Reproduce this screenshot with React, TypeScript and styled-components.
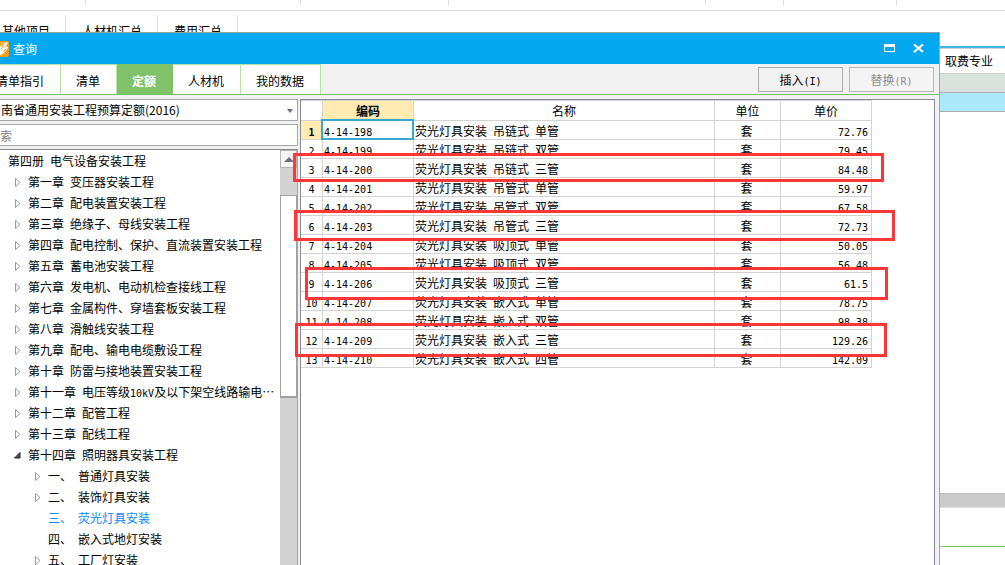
import React from "react";
import styled, { createGlobalStyle, css } from "styled-components";

const GlobalStyle = createGlobalStyle`
  * { box-sizing: border-box; }
  body { margin: 0; background: #fff; overflow: hidden; }
  body, button, select, input, table {
    font-family: "Noto Sans CJK SC", sans-serif;
    font-size: 12px;
    line-height: 16px;
    color: #000;
  }
`;

const HalfWidth = styled.span`
  font-family: "DejaVu Sans Mono", monospace;
  font-size: 10px;
  line-height: 10px;
  white-space: pre;
`;

/* Latin letters, digits and spaces take half the width of a Chinese character. */
function Mixed({ text }: { text: string }) {
  return (
    <>
      {text.split(/([\x20-\x7e]+)/).map((part, i) =>
        i % 2 ? <HalfWidth key={i}>{part}</HalfWidth> : part
      )}
    </>
  );
}

/* ---------- main window behind the dialog ---------- */

const Workspace = styled.div`
  position: relative;
  display: flex;
  flex-direction: column;
  height: 100vh;
  overflow: hidden;
`;

const Ribbon = styled.div`
  display: flex;
  flex: none;
  height: 11px;
  padding-bottom: 5px;
  border-bottom: 1px solid #dedede;
`;

const RibbonGroup = styled.div<{ $width: number }>`
  width: ${(p) => p.$width}px;
  flex: none;
  border-right: 1px solid #dcdcdc;
`;

const SheetTabs = styled.nav`
  display: flex;
  flex: none;
  height: 35px;
  padding-top: 4px;
`;

const SheetTab = styled.button`
  padding: 0 15px 0 16px;
  border: 0;
  border-right: 1px solid #dcdcdc;
  background: #fff;
  white-space: nowrap;
  &:first-child { padding-left: 2px; }
`;

const FeeGrid = styled.section`
  display: flex;
  flex: 1;
  flex-direction: column;
  margin-left: auto;
  width: 66px;
  border-top: 2px solid #3fb4e8;
`;

const FeeHeader = styled.div`
  height: 26px;
  padding: 4px 0 0 6px;
  border-top: 1px solid #d0d0d0;
  border-bottom: 1px solid #d0d0d0;
  line-height: 16px;
  white-space: nowrap;
`;

const FeeRow = styled.div<{ $color: string }>`
  height: 19px;
  border-bottom: 1px solid #adadad;
  background: ${(p) => p.$color};
`;

const FeeScroll = styled.div`
  height: 15px;
  margin-top: auto;
  border-top: 1px solid #c0c0c0;
  border-bottom: 1px solid #dedede;
  background: #cbcbcb;
`;

const FeeFooter = styled.div`
  height: 19px;
  margin-top: 38px;
  border-top: 1px solid #7bc66b;
`;

/* ---------- query dialog ---------- */

const Dialog = styled.section`
  position: absolute;
  top: 32px;
  left: -19px;
  right: 65px;
  bottom: 0;
  display: flex;
  flex-direction: column;
  border-top: 1px solid #9c9c9c;
  border-right: 1px solid #a3a3a3;
  background: #f1f1f1;
`;

const TitleBar = styled.header`
  display: flex;
  align-items: center;
  flex: none;
  height: 31px;
  padding: 0 14px 0 12px;
  background: #02a9f1;
`;

const Title = styled.h1`
  flex: 1;
  margin: 0 0 0 4px;
  color: #fff;
  font-size: 12px;
  font-weight: 400;
`;

const WindowButton = styled.button`
  display: flex;
  margin-left: 17px;
  padding: 0;
  border: 0;
  background: none;
`;

const ToolBar = styled.div`
  display: flex;
  flex: none;
  height: 31px;
  border-bottom: 1px solid #74c168;
`;

const Tab = styled.button<{ $active?: boolean }>`
  padding: 3px 16px 0 15px;
  border: 0;
  border-top: 1px solid #b5e3a5;
  border-right: 1px solid #b5e3a5;
  background: #fff;
  white-space: nowrap;
  ${(p) =>
    p.$active &&
    css`
      border-color: #80c269;
      background: #80c269;
      color: #fff;
      font-weight: 700;
    `}
`;

const Actions = styled.div`
  display: flex;
  gap: 6px;
  margin-left: auto;
  padding: 3px 5px 2px 0;
`;

const ActionButton = styled.button`
  width: 85px;
  padding: 0;
  border: 1px solid #adadad;
  background: #f1f1f1;
  &:disabled { color: #8c8c8c; border-color: #b8b8b8; background: #f4f4f4; }
`;

const Body = styled.div`
  display: flex;
  flex: 1;
  gap: 2px;
  min-height: 0;
  padding: 4px 4px 0 0;
`;

const SidePane = styled.aside`
  display: flex;
  flex: none;
  flex-direction: column;
  gap: 3px;
  width: 317px;
`;

const Combo = styled.div`
  position: relative;
  display: flex;
  flex: none;
`;

const LibrarySelect = styled.select`
  width: 100%;
  height: 22px;
  padding: 0 20px 0 19px;
  border: 1px solid #a6a6a6;
  border-radius: 0;
  appearance: none;
  background: #fff;
`;

const ComboArrow = styled.svg`
  position: absolute;
  top: 10px;
  right: 5px;
  pointer-events: none;
`;

const SearchInput = styled.input`
  flex: none;
  width: 100%;
  height: 22px;
  padding: 0 18px;
  border: 1px solid #a6a6a6;
  background: #fff;
  &::placeholder { color: #808080; opacity: 1; }
`;

const TreePane = styled.div`
  display: flex;
  flex: 1;
  min-height: 0;
  border-top: 1px solid #858793;
  border-right: 1px solid #a6a6a6;
  background: #fff;
`;

const Tree = styled.ul`
  flex: 1;
  min-width: 0;
  margin: 0;
  padding: 0 0 0 19px;
  overflow: hidden;
  list-style: none;
`;

const TreeItem = styled.li<{ $level: number; $selected?: boolean }>`
  display: flex;
  align-items: center;
  height: 21px;
  padding: 1px 0 0 ${(p) => p.$level * 20 - 6}px;
  color: ${(p) => (p.$selected ? "#0a8cff" : "#000")};
  white-space: nowrap;
`;

const TreeRoot = styled(TreeItem)`
  padding-left: 8px;
`;

const Expander = styled.button`
  display: flex;
  flex: none;
  width: 14px;
  padding: 0;
  border: 0;
  background: none;
`;

const ExpanderSpace = styled.span`
  flex: none;
  width: 14px;
`;

const ScrollBar = styled.div`
  display: flex;
  flex: none;
  flex-direction: column;
  width: 17px;
  background: #d3d3d3;
`;

const ScrollUp = styled.button`
  display: flex;
  align-items: center;
  justify-content: center;
  height: 18px;
  margin-bottom: 27px;
  padding: 0;
  border: 1px solid #b5b5b5;
  background: #f4f4f4;
`;

const ScrollThumb = styled.div`
  height: 203px;
  border: 1px solid #a0a0a0;
  border-bottom-width: 2px;
  background: #fff;
`;

const GridPane = styled.div`
  flex: 1;
  min-width: 0;
  overflow: hidden;
  border: 1px solid #858a93;
  border-bottom: 0;
  background: #fff;
`;

const Grid = styled.table`
  width: 571px;
  table-layout: fixed;
  border-spacing: 0;
  border-top: 1px solid #d3d3d3;
`;

const cell = css`
  padding: 0;
  border-right: 1px solid #d3d3d3;
  border-bottom: 1px solid #d3d3d3;
  font-weight: 400;
  white-space: nowrap;
`;

const HeadCell = styled.th<{ $marked?: boolean }>`
  ${cell}
  height: 20px;
  ${(p) => p.$marked && "background: #ffebb1; font-weight: 700;"}
`;

const RowNumber = styled.th<{ $marked?: boolean }>`
  ${cell}
  height: 19px;
  padding-top: 2px;
  ${(p) => p.$marked && "background: #ffebb1; font-weight: 700;"}
`;

const Cell = styled.td<{ $align?: string; $focused?: boolean }>`
  ${cell}
  height: 19px;
  padding: 2px 3px 0 1px;
  text-align: ${(p) => p.$align ?? "left"};
  ${(p) =>
    p.$focused &&
    css`
      position: relative;
      &::after {
        content: "";
        position: absolute;
        inset: -2px -1px -1px -2px;
        border: 2px solid #39a7d3;
      }
    `}
`;

const Highlight = styled.div<{ $x: number; $y: number; $w: number; $h: number }>`
  position: absolute;
  left: ${(p) => p.$x}px;
  top: ${(p) => p.$y}px;
  width: ${(p) => p.$w}px;
  height: ${(p) => p.$h}px;
  border: 3px solid #fd3737;
  pointer-events: none;
`;

/* ---------- data ---------- */

const ribbonGroups = [86, 215, 148, 257, 78, 113];
const sheetTabs = ["其他项目", "人材机汇总", "费用汇总"];
const tabs = ["清单指引", "清单", "定额", "人材机", "我的数据"];

type Node = { text: string; level: number; state: "closed" | "open" | "leaf"; selected?: boolean };

const nodes: Node[] = [
  ...[
    "第一章 变压器安装工程",
    "第二章 配电装置安装工程",
    "第三章 绝缘子、母线安装工程",
    "第四章 配电控制、保护、直流装置安装工程",
    "第五章 蓄电池安装工程",
    "第六章 发电机、电动机检查接线工程",
    "第七章 金属构件、穿墙套板安装工程",
    "第八章 滑触线安装工程",
    "第九章 配电、输电电缆敷设工程",
    "第十章 防雷与接地装置安装工程",
    "第十一章 电压等级10kV及以下架空线路输电…",
    "第十二章 配管工程",
    "第十三章 配线工程",
  ].map((text): Node => ({ text, level: 1, state: "closed" })),
  { text: "第十四章 照明器具安装工程", level: 1, state: "open" },
  { text: "一、 普通灯具安装", level: 2, state: "closed" },
  { text: "二、 装饰灯具安装", level: 2, state: "closed" },
  { text: "三、 荧光灯具安装", level: 2, state: "leaf", selected: true },
  { text: "四、 嵌入式地灯安装", level: 2, state: "leaf" },
  { text: "五、 工厂灯安装", level: 2, state: "closed" },
];

const rows: [string, string, string][] = [
  ["4-14-198", "荧光灯具安装 吊链式 单管", "72.76"],
  ["4-14-199", "荧光灯具安装 吊链式 双管", "79.45"],
  ["4-14-200", "荧光灯具安装 吊链式 三管", "84.48"],
  ["4-14-201", "荧光灯具安装 吊管式 单管", "59.97"],
  ["4-14-202", "荧光灯具安装 吊管式 双管", "67.58"],
  ["4-14-203", "荧光灯具安装 吊管式 三管", "72.73"],
  ["4-14-204", "荧光灯具安装 吸顶式 单管", "50.05"],
  ["4-14-205", "荧光灯具安装 吸顶式 双管", "56.48"],
  ["4-14-206", "荧光灯具安装 吸顶式 三管", "61.5"],
  ["4-14-207", "荧光灯具安装 嵌入式 单管", "78.75"],
  ["4-14-208", "荧光灯具安装 嵌入式 双管", "98.38"],
  ["4-14-209", "荧光灯具安装 嵌入式 三管", "129.26"],
  ["4-14-210", "荧光灯具安装 嵌入式 四管", "142.09"],
];

const highlights = [
  { x: 312, y: 120, w: 591, h: 29 },
  { x: 313, y: 177, w: 601, h: 31 },
  { x: 324, y: 234, w: 583, h: 33 },
  { x: 314, y: 290, w: 592, h: 34 },
];

/* ---------- drawings ---------- */

const AppLogo = () => (
  <svg width="16" height="16" viewBox="0 0 16 16" aria-hidden="true">
    <rect width="16" height="16" rx="2" fill="#f79a0e" />
    <path d="M0 1h14v6l-5 8H0z" fill="#fbb53a" />
    <path d="M5 3l3 3 5-5 2 1-5 6 4-3 1 2-4 5-4 2-4-1z" fill="#fff" />
    <path d="M8 8l3-4M10 11l3-3" stroke="#f7a52a" strokeWidth="1" />
  </svg>
);

const ClosedArrow = () => (
  <svg width="7" height="9" viewBox="0 0 7 9" aria-hidden="true">
    <path d="M1.5 0.5v8l4.5-4z" fill="#fff" stroke="#9a9a9a" />
  </svg>
);

const OpenArrow = () => (
  <svg width="7" height="7" viewBox="0 0 7 7" aria-hidden="true">
    <path d="M6 0.5v5.5H0.5z" fill="#505050" stroke="#262626" />
  </svg>
);

export default function App() {
  return (
    <Workspace>
      <GlobalStyle />
      <Ribbon>
        {ribbonGroups.map((w, i) => (
          <RibbonGroup key={i} $width={w} />
        ))}
      </Ribbon>
      <SheetTabs>
        {sheetTabs.map((t) => (
          <SheetTab key={t}>{t}</SheetTab>
        ))}
      </SheetTabs>
      <FeeGrid>
        <FeeHeader>取费专业</FeeHeader>
        <FeeRow $color="#d9e2dd" />
        <FeeRow $color="#ace8fa" />
        <FeeScroll />
        <FeeFooter />
      </FeeGrid>

      <Dialog role="dialog" aria-labelledby="query-title">
        <TitleBar>
          <AppLogo />
          <Title id="query-title">查询</Title>
          <WindowButton aria-label="最大化">
            <svg width="12" height="9" viewBox="0 0 12 9">
              <path d="M0 0h11v8H0zM1 3v4h9V3z" fill="#fff" fillRule="evenodd" />
            </svg>
          </WindowButton>
          <WindowButton aria-label="关闭">
            <svg width="12" height="9" viewBox="0 0 12 9">
              <path d="M1 0.5l9 7.5M10 0.5l-9 7.5" stroke="#fff" strokeWidth="2.2" />
            </svg>
          </WindowButton>
        </TitleBar>
        <ToolBar>
          {tabs.map((t) => (
            <Tab key={t} $active={t === "定额"}>{t}</Tab>
          ))}
          <Actions>
            <ActionButton><Mixed text="插入(I)" /></ActionButton>
            <ActionButton disabled><Mixed text="替换(R)" /></ActionButton>
          </Actions>
        </ToolBar>
        <Body>
          <SidePane>
            <Combo>
              <LibrarySelect aria-label="定额库">
                <option>南省通用安装工程预算定额(2016)</option>
              </LibrarySelect>
              <ComboArrow width="6" height="4" viewBox="0 0 6 4">
                <path d="M0 0h6L3 4z" fill="#6b6f80" />
              </ComboArrow>
            </Combo>
            <SearchInput placeholder="索" aria-label="搜索" />
            <TreePane>
              <Tree>
                <TreeRoot $level={0}>
                  <span><Mixed text="第四册 电气设备安装工程" /></span>
                </TreeRoot>
                {nodes.map((n) => (
                  <TreeItem key={n.text} $level={n.level} $selected={n.selected}>
                    {n.state === "leaf" ? (
                      <ExpanderSpace />
                    ) : (
                      <Expander aria-label={n.state === "open" ? "折叠" : "展开"}>
                        {n.state === "open" ? <OpenArrow /> : <ClosedArrow />}
                      </Expander>
                    )}
                    <span><Mixed text={n.text} /></span>
                  </TreeItem>
                ))}
              </Tree>
              <ScrollBar>
                <ScrollUp aria-label="向上滚动">
                  <svg width="10" height="5" viewBox="0 0 10 5">
                    <path d="M0 5h10L5 0z" fill="#6b6f80" />
                  </svg>
                </ScrollUp>
                <ScrollThumb />
              </ScrollBar>
            </TreePane>
          </SidePane>
          <GridPane>
            <Grid>
              <colgroup>
                <col width="22" />
                <col width="91" />
                <col width="301" />
                <col width="66" />
                <col width="91" />
              </colgroup>
              <thead>
                <tr>
                  <HeadCell />
                  <HeadCell $marked>编码</HeadCell>
                  <HeadCell>名称</HeadCell>
                  <HeadCell>单位</HeadCell>
                  <HeadCell>单价</HeadCell>
                </tr>
              </thead>
              <tbody>
                {rows.map(([code, name, price], i) => (
                  <tr key={code}>
                    <RowNumber $marked={i === 0}><Mixed text={String(i + 1)} /></RowNumber>
                    <Cell $focused={i === 0}><Mixed text={code} /></Cell>
                    <Cell><Mixed text={name} /></Cell>
                    <Cell $align="center">套</Cell>
                    <Cell $align="right"><Mixed text={price} /></Cell>
                  </tr>
                ))}
              </tbody>
            </Grid>
          </GridPane>
        </Body>
        {highlights.map((h) => (
          <Highlight key={h.y} $x={h.x} $y={h.y} $w={h.w} $h={h.h} />
        ))}
      </Dialog>
    </Workspace>
  );
}
